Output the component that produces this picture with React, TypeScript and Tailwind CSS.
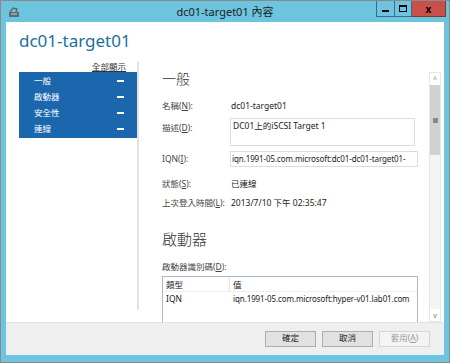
const font = { fontFamily: '"Noto Sans", "Noto Sans CJK TC", sans-serif' }

const navItems = ['一般', '啟動器', '安全性', '連線']

function Row({ label, children, className = '' }: { label: React.ReactNode; children: React.ReactNode; className?: string }) {
  return (
    <div className={`flex ${className}`}>
      <div className="w-[68px] shrink-0 text-[8.5px] leading-[14px] text-[#444]">{label}</div>
      {children}
    </div>
  )
}

export default function App() {
  return (
    <div style={font} className="flex h-[363px] w-[450px] flex-col overflow-hidden border border-[#8a8a8a] bg-[#6cc4df]">
      {/* 標題列 */}
      <div className="relative flex h-[21px] shrink-0 items-center">
        <svg className="ml-[7px] h-[12px] w-[12px]" viewBox="0 0 12 12">
          <rect x="1" y="6" width="10" height="5" fill="#5d6a72" />
          <path d="M2 6 L5 2 L9 3 L8 6" fill="none" stroke="#5d6a72" strokeWidth="1.4" />
          <rect x="3" y="7.5" width="6" height="1" fill="#c9d4da" />
        </svg>
        <div className="absolute left-0 right-0 top-[4px] text-center text-[11px] leading-[14px] text-[#1d1d1d]">dc01-target01 內容</div>
        <div className="absolute right-[3px] top-[-1px] flex h-[17px]">
          <div className="flex w-[18px] items-center justify-center border border-r-0 border-[#3b6e84]">
            <div className="mt-[4px] h-[2px] w-[7px] bg-black" />
          </div>
          <div className="flex w-[18px] items-center justify-center border border-[#3b6e84]">
            <div className="h-[7px] w-[8px] border-[1.5px] border-t-[2.5px] border-black" />
          </div>
          <div className="flex w-[34px] items-center justify-center border border-l-0 border-[#7a3a36] bg-[#c7504a] text-[10px] font-bold leading-none text-black">x</div>
        </div>
      </div>

      {/* 內容 */}
      <div className="mx-[5px] flex h-[333px] flex-col bg-white">
        <div className="h-[36px] shrink-0 pl-[13px] pt-[7px] text-[17px] leading-[24px] text-[#1d6f9b]">dc01-target01</div>

        <div className="flex h-[264px] shrink-0">
          {/* 左側導覽 */}
          <div className="ml-[13px] w-[118px] shrink-0">
            <div className="mt-[4px] h-[10px] pr-[11px] text-right text-[8.5px] leading-[10px] text-[#333] underline">全部顯示</div>
            <div className="bg-[#1b67ae] py-[1px]">
              {navItems.map((n) => (
                <div key={n} className="flex h-[16px] items-center justify-between pl-[15px] pr-[13px] text-[8.5px] text-white">
                  <span>{n}</span>
                  <span className="h-[2px] w-[7px] bg-white" />
                </div>
              ))}
            </div>
          </div>
          <div className="mt-[4px] h-[248px] w-[2px] shrink-0 bg-[#e3e3e3]" />

          {/* 右側面板 */}
          <div className="w-[290px] shrink-0 overflow-hidden pl-[23px]">
            <div className="mt-[11px] h-[20px] text-[14px] font-light leading-[20px] text-[#333]">一般</div>
            <Row label={<>名稱(<u>N</u>):</>} className="mt-[10px] h-[14px]">
              <div className="pl-[1px] text-[8.5px] leading-[14px] text-[#222]">dc01-target01</div>
            </Row>
            <Row label={<>描述(<u>D</u>):</>} className="mt-[5px] h-[28px] pt-[3px]">
              <div className="-mt-[3px] h-[28px] w-[185px] border border-[#dcdcdc] px-[2px] text-[8.5px] leading-[14px] text-[#222]">DC01上的iSCSI Target 1</div>
            </Row>
            <Row label={<>IQN(<u>I</u>):</>} className="mt-[5px] h-[16px] items-center">
              <div className="h-[16px] w-[188px] overflow-hidden whitespace-nowrap border border-[#dcdcdc] px-[1px] text-[8px] leading-[14px] tracking-[-0.1px] text-[#222]">iqn.1991-05.com.microsoft:dc01-dc01-target01-</div>
            </Row>
            <Row label={<>狀態(<u>S</u>):</>} className="mt-[10px] h-[14px]">
              <div className="pl-[1px] text-[8.5px] leading-[14px] text-[#222]">已連線</div>
            </Row>
            <Row label={<>上次登入時間(<u>L</u>):</>} className="mt-[5px] h-[14px]">
              <div className="pl-[1px] text-[8.5px] leading-[14px] text-[#222]">2013/7/10 下午 02:35:47</div>
            </Row>
            <div className="mt-[19px] h-[20px] text-[15px] font-light leading-[20px] text-[#333]">啟動器</div>
            <div className="mt-[11px] h-[14px] text-[8.5px] leading-[14px] text-[#444]">啟動器識別碼(<u>D</u>):</div>
            <div className="mt-[2px] h-[60px] w-[256px] border border-[#abb8cf] text-[8.5px] text-[#222]">
              <div className="flex h-[15px] border-b border-[#f0f0f0]">
                <div className="w-[67px] shrink-0 border-r border-[#e5e5e5] pl-[3px] leading-[15px]">類型</div>
                <div className="pl-[3px] leading-[15px]">值</div>
              </div>
              <div className="flex h-[14px] leading-[14px]">
                <div className="w-[67px] shrink-0 pl-[3px]">IQN</div>
                <div className="whitespace-nowrap pl-[3px] text-[8px] tracking-[-0.1px]">iqn.1991-05.com.microsoft:hyper-v01.lab01.com</div>
              </div>
            </div>
          </div>

          {/* 捲軸 */}
          <div className="mt-[14px] flex w-[12px] shrink-0 flex-col border border-[#e6e6e6] bg-[#f4f4f4]">
            <div className="flex h-[12px] items-center justify-center bg-white text-[7px] leading-none text-[#777]">^</div>
            <div className="flex h-[70px] items-center justify-center bg-[#d1d1d1]">
              <div className="h-[5px] w-[5px] bg-[#888]" />
            </div>
            <div className="flex-1" />
            <div className="flex h-[12px] items-center justify-center bg-white text-[7px] leading-none text-[#777]">v</div>
          </div>
        </div>

        {/* 按鈕列 */}
        <div className="flex h-[33px] shrink-0 items-center justify-end gap-[6px] border-t border-[#e2e2e2] bg-[#efefef] pb-[1px] pr-[14px]">
          <button className="h-[16px] w-[51px] border border-[#adadad] bg-[#e1e1e1] text-[8.5px] leading-none text-[#222]">確定</button>
          <button className="h-[16px] w-[51px] border border-[#adadad] bg-[#e1e1e1] text-[8.5px] leading-none text-[#222]">取消</button>
          <button className="h-[16px] w-[51px] border border-[#d6d6d6] bg-[#f4f4f4] text-[8.5px] leading-none text-[#9a9a9a]">套用(<u>A</u>)</button>
        </div>
      </div>
    </div>
  )
}
